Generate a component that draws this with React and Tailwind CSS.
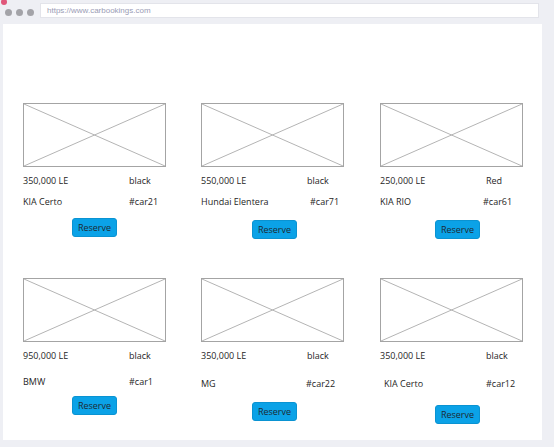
const rows = [
  {
    h: 'h-[175px]',
    cards: [
      { price: '350,000 LE', color: 'black', name: 'KIA Certo', code: '#car21', nameMt: 'mt-[9px]', nameCls: '', codeCls: '', btn: 'mt-[10px] ml-[49px]' },
      { price: '550,000 LE', color: 'black', name: 'Hundai Elentera', code: '#car71', nameMt: 'mt-[9px]', nameCls: '', codeCls: 'ml-[3px]', btn: 'mt-[12px] ml-[51px]' },
      { price: '250,000 LE', color: 'Red', name: 'KIA RIO', code: '#car61', nameMt: 'mt-[9px]', nameCls: '', codeCls: '-ml-[3px]', btn: 'mt-[12px] ml-[55px]' },
    ],
  },
  {
    h: 'h-[160px]',
    cards: [
      { price: '950,000 LE', color: 'black', name: 'BMW', code: '#car1', nameMt: 'mt-[14px]', nameCls: '', codeCls: '', btn: 'mt-[8px] ml-[49px]' },
      { price: '350,000 LE', color: 'black', name: 'MG', code: '#car22', nameMt: 'mt-[16px]', nameCls: '', codeCls: '-ml-[1px]', btn: 'mt-[12px] ml-[51px]' },
      { price: '350,000 LE', color: 'black', name: 'KIA Certo', code: '#car12', nameMt: 'mt-[16px]', nameCls: 'pl-[4px]', codeCls: '', btn: 'mt-[15px] ml-[55px]' },
    ],
  },
]

function Placeholder() {
  return (
    <div className="w-[143px] h-[64px] border border-[#a4a4a4] bg-white">
      <svg width="100%" height="100%" viewBox="0 0 141 62" preserveAspectRatio="none">
        <line x1="0" y1="0" x2="141" y2="62" stroke="#b4b4b4" strokeWidth="1" />
        <line x1="141" y1="0" x2="0" y2="62" stroke="#b4b4b4" strokeWidth="1" />
      </svg>
    </div>
  )
}

function CarCard({ car }) {
  return (
    <div className="flex flex-col">
      <Placeholder />
      <div className="mt-[8px] flex leading-[12px]">
        <span className="w-[106px]">{car.price}</span>
        <span>{car.color}</span>
      </div>
      <div className={`${car.nameMt} flex leading-[12px]`}>
        <span className={`w-[106px] ${car.nameCls}`}>{car.name}</span>
        <span className={car.codeCls}>{car.code}</span>
      </div>
      <button className={`${car.btn} w-[45px] h-[19px] rounded-[3px] bg-[#0ba2e7] border border-[#0a93d2] text-[9px] leading-none text-[#1d2a33]`}>
        Reserve
      </button>
    </div>
  )
}

export default function App() {
  return (
    <div className="w-[554px] h-[447px] bg-[#eeeff4] overflow-hidden relative" style={{ fontFamily: '"Open Sans", "Liberation Sans", sans-serif' }}>
      <span className="absolute left-[1px] -top-[1px] w-[6px] h-[6px] rounded-full bg-[#e0577a]" />
      <div className="h-[23px] flex items-center">
        <div className="flex gap-[4px] ml-[5px] mt-[1px]">
          <span className="w-[7px] h-[7px] rounded-full bg-[#a3a3a8]" />
          <span className="w-[7px] h-[7px] rounded-full bg-[#a3a3a8]" />
          <span className="w-[7px] h-[7px] rounded-full bg-[#a3a3a8]" />
        </div>
        <div className="ml-[6px] w-[499px] h-[15px] -mt-[2px] bg-white border border-[#e3e4ea] flex items-center pl-[6px] text-[8px] text-[#9a9cb5] font-['Liberation_Sans',sans-serif]">
          https://www.carbookings.com
        </div>
      </div>
      <div className="ml-[3px] mt-[1px] w-[539px] h-[416px] bg-white pl-[20px] pt-[79px] text-[9px] text-[#262626]">
        {rows.map((row, i) => (
          <div key={i} className={`grid grid-cols-[178px_179px_160px] ${row.h}`}>
            {row.cards.map((car) => (
              <CarCard key={car.code} car={car} />
            ))}
          </div>
        ))}
      </div>
    </div>
  )
}
